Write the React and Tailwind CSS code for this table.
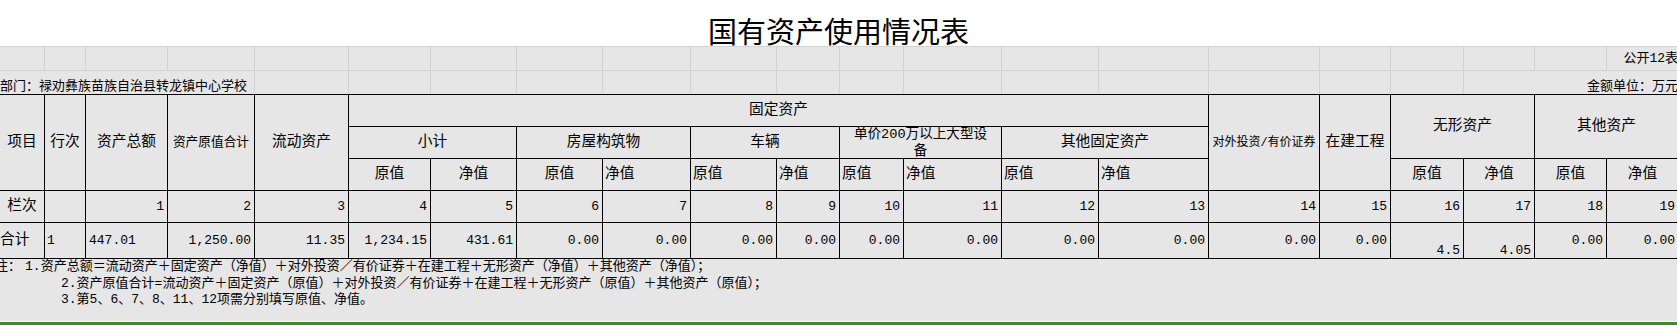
import React from "react";

const GRID =
  "grid grid-cols-[45px_41px_82px_87px_94px_82px_86px_86px_88px_86px_63px_64px_98px_97px_110px_111px_71px_73px_71px_72px_72px]";

const FONT = "font-['Liberation_Mono','Noto_Sans_CJK_SC',monospace]";

function C({ className = "", children }) {
  return (
    <div
      className={
        "border-r border-b border-black flex overflow-hidden whitespace-nowrap " +
        className
      }
    >
      {children}
    </div>
  );
}

const H = "items-center justify-center text-[14.7px] leading-[17px]";
const SUBC = "items-center justify-center text-[14.7px]";
const SUBL = "items-center justify-start pl-[2px] text-[14.7px]";
const NUMR = "items-center justify-end pr-[3px] text-[13px]";

export default function App() {
  const zeros = Array.from({ length: 21 });
  const lanci = Array.from({ length: 19 }, (_, i) => i + 1);
  return (
    <div
      className={
        "w-[1677px] h-[325px] overflow-hidden bg-white text-black " + FONT
      }
    >
      {/* Title */}
      <div className="h-[46px] flex justify-center pt-[16px]">
        <div className="text-[29px] leading-[29px] font-['Noto_Sans_CJK_SC',sans-serif] font-normal tracking-[0px]">
          国有资产使用情况表
        </div>
      </div>

      <div className="bg-[#e6e6e6]">
        {/* Row 1 */}
        <div className={GRID + " h-[24px]"}>
          {zeros.map((_, i) => (
            <div
              key={i}
              className="border-t border-r border-[#d2d2d2] flex items-end justify-end overflow-visible whitespace-nowrap text-[13px] leading-[15px] pb-[4px]"
            >
              {i === 20 ? "公开12表" : ""}
            </div>
          ))}
        </div>
        {/* Row 2 */}
        <div className={GRID + " h-[24px]"}>
          <div className="col-span-4 border-t border-r border-[#d2d2d2] flex items-end text-[13px] leading-[15px] whitespace-nowrap">
            部门：禄劝彝族苗族自治县转龙镇中心学校
          </div>
          {Array.from({ length: 14 }).map((_, i) => (
            <div key={i} className="border-t border-r border-[#d2d2d2]" />
          ))}
          <div className="border-t border-[#d2d2d2]" />
          <div className="col-span-2 border-t border-[#d2d2d2] flex items-end justify-end text-[13px] leading-[15px] whitespace-nowrap pr-[1px]">
            金额单位：万元
          </div>
        </div>

        {/* Table */}
        <div
          className={
            GRID + " grid-rows-[32px_32px_32px_32px_36px] border-t border-black"
          }
        >
          {/* Row A */}
          <C className={"row-span-3 " + H}>项目</C>
          <C className={"row-span-3 " + H}>行次</C>
          <C className={"row-span-3 " + H}>资产总额</C>
          <C className="row-span-3 items-center justify-center text-[12.7px]">
            资产原值合计
          </C>
          <C className={"row-span-3 " + H}>流动资产</C>
          <C className={"col-span-10 " + H}>固定资产</C>
          <C className="row-span-3 items-center justify-center text-[12px]">
            对外投资/有价证券
          </C>
          <C className={"row-span-3 " + H}>在建工程</C>
          <C className={"col-span-2 row-span-2 " + H}>无形资产</C>
          <C className={"col-span-2 row-span-2 " + H}>其他资产</C>

          {/* Row B */}
          <C className={"col-span-2 " + H}>小计</C>
          <C className={"col-span-2 " + H}>房屋构筑物</C>
          <C className={"col-span-2 " + H}>车辆</C>
          <C className="col-span-2 items-center justify-center text-[13.6px] leading-[17px] text-center whitespace-normal">
            <span>
              单价200万以上大型设
              <br />备
            </span>
          </C>
          <C className={"col-span-2 " + H}>其他固定资产</C>

          {/* Row C */}
          <C className={SUBC}>原值</C>
          <C className={SUBC}>净值</C>
          <C className={SUBC}>原值</C>
          <C className={SUBL}>净值</C>
          <C className={SUBL}>原值</C>
          <C className={SUBL}>净值</C>
          <C className={SUBL}>原值</C>
          <C className={SUBL}>净值</C>
          <C className={SUBL}>原值</C>
          <C className={SUBL}>净值</C>
          <C className={SUBC}>原值</C>
          <C className={SUBC}>净值</C>
          <C className={SUBC}>原值</C>
          <C className={SUBC}>净值</C>

          {/* Row D */}
          <C className={H}>栏次</C>
          <C className={H}></C>
          {lanci.map((n) => (
            <C key={n} className={NUMR}>
              {n}
            </C>
          ))}

          {/* Row E */}
          <C className="items-center justify-start text-[14.7px]">合计</C>
          <C className="items-center justify-start pl-[2px] text-[13px]">1</C>
          <C className="items-center justify-start pl-[3px] text-[13px]">
            447.01
          </C>
          <C className={NUMR}>1,250.00</C>
          <C className={NUMR}>11.35</C>
          <C className={NUMR}>1,234.15</C>
          <C className={NUMR}>431.61</C>
          {Array.from({ length: 10 }).map((_, i) => (
            <C key={"z" + i} className={NUMR}>
              0.00
            </C>
          ))}
          <C className="items-end justify-end pr-[3px] pb-[1px] text-[13px] leading-[13px]">
            4.5
          </C>
          <C className="items-end justify-end pr-[3px] pb-[1px] text-[13px] leading-[13px]">
            4.05
          </C>
          <C className={NUMR}>0.00</C>
          <C className={NUMR}>0.00</C>
        </div>

        {/* Notes */}
        <div className="h-[62px] text-[13px] leading-[16.5px] whitespace-nowrap">
          <div className="-ml-[5px]">
            注：<span className="ml-[4px]">1.</span>
            资产总额＝流动资产＋固定资产（净值）＋对外投资／有价证券＋在建工程＋无形资产（净值）＋其他资产（净值）；
          </div>
          <div className="pl-[61px]">
            2.资产原值合计=流动资产＋固定资产（原值）＋对外投资／有价证券＋在建工程＋无形资产（原值）＋其他资产（原值）；
          </div>
          <div className="pl-[61px]">
            3.第5、6、7、8、11、12项需分别填写原值、净值。
          </div>
        </div>
      </div>
      <div className="h-[1px] bg-[#f4f4f4]" />
      <div className="h-[3px] bg-[#3f8a24]" />
    </div>
  );
}
